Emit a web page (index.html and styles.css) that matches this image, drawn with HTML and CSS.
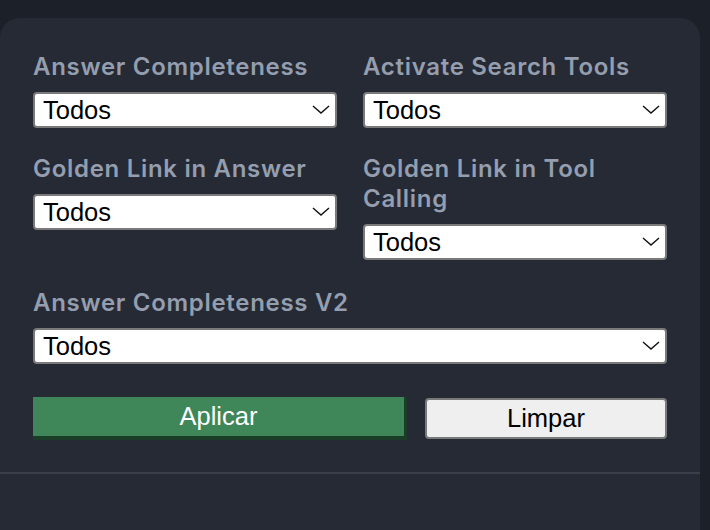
FILE: index.html
```html
<!DOCTYPE html>
<html lang="pt">
<head>
<meta charset="utf-8">
<title>Filtros</title>
<link rel="stylesheet" href="styles.css">
</head>
<body>
<div class="panel">
  <div class="grid">
    <div class="field">
      <label class="label">Answer Completeness</label>
      <div class="select-wrap">
        <select class="select"><option>Todos</option></select>
        <svg class="chev" viewBox="0 0 18 9" width="18" height="9"><path d="M1 1 L9 8 L17 1" fill="none" stroke="#111" stroke-width="1.4"/></svg>
      </div>
    </div>
    <div class="field">
      <label class="label">Activate Search Tools</label>
      <div class="select-wrap">
        <select class="select"><option>Todos</option></select>
        <svg class="chev" viewBox="0 0 18 9" width="18" height="9"><path d="M1 1 L9 8 L17 1" fill="none" stroke="#111" stroke-width="1.4"/></svg>
      </div>
    </div>
    <div class="field">
      <label class="label">Golden Link in Answer</label>
      <div class="select-wrap">
        <select class="select"><option>Todos</option></select>
        <svg class="chev" viewBox="0 0 18 9" width="18" height="9"><path d="M1 1 L9 8 L17 1" fill="none" stroke="#111" stroke-width="1.4"/></svg>
      </div>
    </div>
    <div class="field">
      <label class="label">Golden Link in Tool Calling</label>
      <div class="select-wrap">
        <select class="select"><option>Todos</option></select>
        <svg class="chev" viewBox="0 0 18 9" width="18" height="9"><path d="M1 1 L9 8 L17 1" fill="none" stroke="#111" stroke-width="1.4"/></svg>
      </div>
    </div>
    <div class="field wide">
      <label class="label">Answer Completeness V2</label>
      <div class="select-wrap">
        <select class="select"><option>Todos</option></select>
        <svg class="chev" viewBox="0 0 18 9" width="18" height="9"><path d="M1 1 L9 8 L17 1" fill="none" stroke="#111" stroke-width="1.4"/></svg>
      </div>
    </div>
  </div>
  <div class="actions">
    <button class="btn apply">Aplicar</button>
    <button class="btn clear">Limpar</button>
  </div>
  <div class="divider"></div>
</div>
</body>
</html>
```

FILE: styles.css
```css
html, body {
  margin: 0;
  padding: 0;
  background: #1c2029;
  height: 100%;
  overflow: hidden;
}

.panel {
  margin-top: 18px;
  width: 700px;
  height: 512px;
  background: #252a35;
  border-radius: 20px 20px 0 0;
  box-sizing: border-box;
  padding-top: 34px;
}

.grid {
  display: grid;
  grid-template-columns: 304px 304px;
  column-gap: 26px;
  row-gap: 26px;
  padding: 0 33px;
  align-items: start;
}

.field {
  display: flex;
  flex-direction: column;
}

.field.wide {
  grid-column: 1 / 3;
  margin-top: 2px;
}

.label {
  font-family: Inter, "Liberation Sans", sans-serif;
  font-weight: 600;
  font-size: 24px;
  letter-spacing: 0.7px;
  line-height: 30px;
  color: #949eae;
  margin-bottom: 10px;
}

.select-wrap {
  position: relative;
}

.select {
  appearance: none;
  -webkit-appearance: none;
  width: 100%;
  height: 36px;
  box-sizing: border-box;
  border: 2px solid #7a7a7a;
  border-radius: 4px;
  background: #ffffff;
  font-family: "Liberation Sans", Arial, sans-serif;
  font-size: 25.5px;
  color: #000;
  padding: 0 0 0 8px;
  margin: 0;
  line-height: 32px;
}

.chev {
  position: absolute;
  right: 7px;
  top: 13px;
  pointer-events: none;
}

.actions {
  display: grid;
  grid-template-columns: 374fr 242fr;
  column-gap: 18px;
  padding: 33px 33px 32px;
  align-items: start;
}

.btn {
  font-family: "Liberation Sans", Arial, sans-serif;
  font-size: 25.5px;
  margin: 0;
  box-sizing: border-box;
  cursor: pointer;
}

.apply {
  height: 43px;
  background: #3f8659;
  color: #ffffff;
  border-style: solid;
  border-width: 0 3px 4px 0;
  border-color: #3f8659 #1b3d27 #1b3d27 #3f8659;
  border-radius: 0;
  padding: 0;
}

.clear {
  height: 41px;
  margin-top: 1px;
  background: #efefef;
  color: #000;
  border: 2px solid #7a7a7a;
  border-radius: 4px;
  padding: 0;
}

.divider {
  height: 2px;
  background: #3a404b;
}
```
